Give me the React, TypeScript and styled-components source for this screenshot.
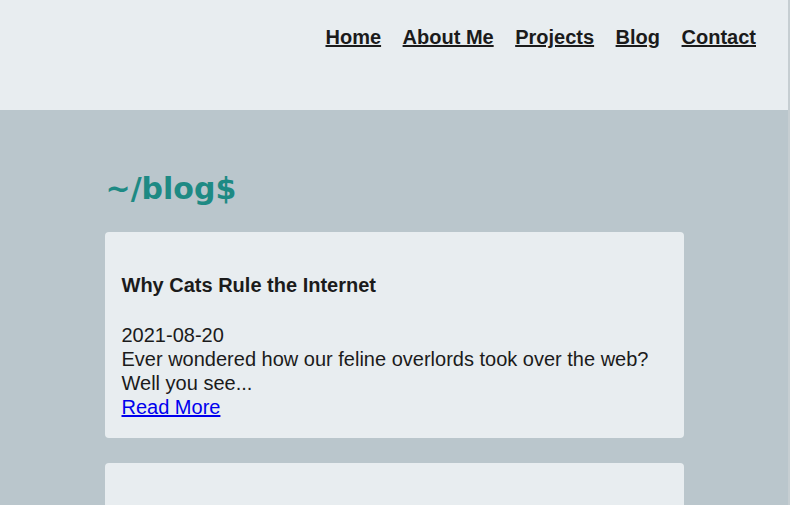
import React from "react";
import styled, { createGlobalStyle } from "styled-components";

const Global = createGlobalStyle`
  html { background: #c6ced2; }
  body { margin: 0; font-family: "Liberation Sans", Arial, sans-serif; color: #1b1b1b; }
`;

const Page = styled.div`
  width: 788px;
  min-height: 505px;
  background: #bac6cc;
`;

const Header = styled.header`
  height: 110px;
  background: #e8edf0;
  display: flex;
  justify-content: flex-end;
  align-items: flex-start;
  padding: 25px 32px 0 0;
  box-sizing: border-box;
`;

const Nav = styled.nav`
  display: flex;
  gap: 21.5px;
`;

const NavLink = styled.a`
  font-size: 20px;
  font-weight: bold;
  line-height: 24px;
  color: #1b1b1b;
  text-decoration: underline;
`;

const Main = styled.main`
  width: 579px;
  margin: 0 auto;
  padding-top: 62px;
  display: flex;
  flex-direction: column;
`;

const Title = styled.h1`
  margin: 0 0 27px 1px;
  font-family: "DejaVu Sans", sans-serif;
  font-size: 30px;
  line-height: 33px;
  font-weight: bold;
  color: #1e8a84;
`;

const Posts = styled.div`
  display: flex;
  flex-direction: column;
  gap: 25px;
`;

const Card = styled.article`
  background: #e8edf0;
  border-radius: 4px;
  padding: 41px 17px 19px;
  font-size: 20px;
  line-height: 24px;
`;

const PostTitle = styled.h3`
  margin: 0 0 26px;
  font-size: 20px;
  line-height: 24px;
  font-weight: bold;
`;

const Line = styled.div``;

const ReadMore = styled.a`
  color: #0000ee;
  text-decoration: underline;
`;

const posts = [
  {
    title: "Why Cats Rule the Internet",
    date: "2021-08-20",
    excerpt: "Ever wondered how our feline overlords took over the web? Well you see...",
  },
  {
    title: "The Art of Napping",
    date: "2021-07-14",
    excerpt: "A comprehensive guide to the perfect afternoon nap...",
  },
];

export default function App() {
  return (
    <>
      <Global />
      <Page>
        <Header>
          <Nav>
            {["Home", "About Me", "Projects", "Blog", "Contact"].map((l) => (
              <NavLink key={l} href="#">
                {l}
              </NavLink>
            ))}
          </Nav>
        </Header>
        <Main>
          <Title>~/blog$</Title>
          <Posts>
            {posts.map((p) => (
              <Card key={p.title}>
                <PostTitle>{p.title}</PostTitle>
                <Line>{p.date}</Line>
                <Line>{p.excerpt}</Line>
                <ReadMore href="#">Read More</ReadMore>
              </Card>
            ))}
          </Posts>
        </Main>
      </Page>
    </>
  );
}
